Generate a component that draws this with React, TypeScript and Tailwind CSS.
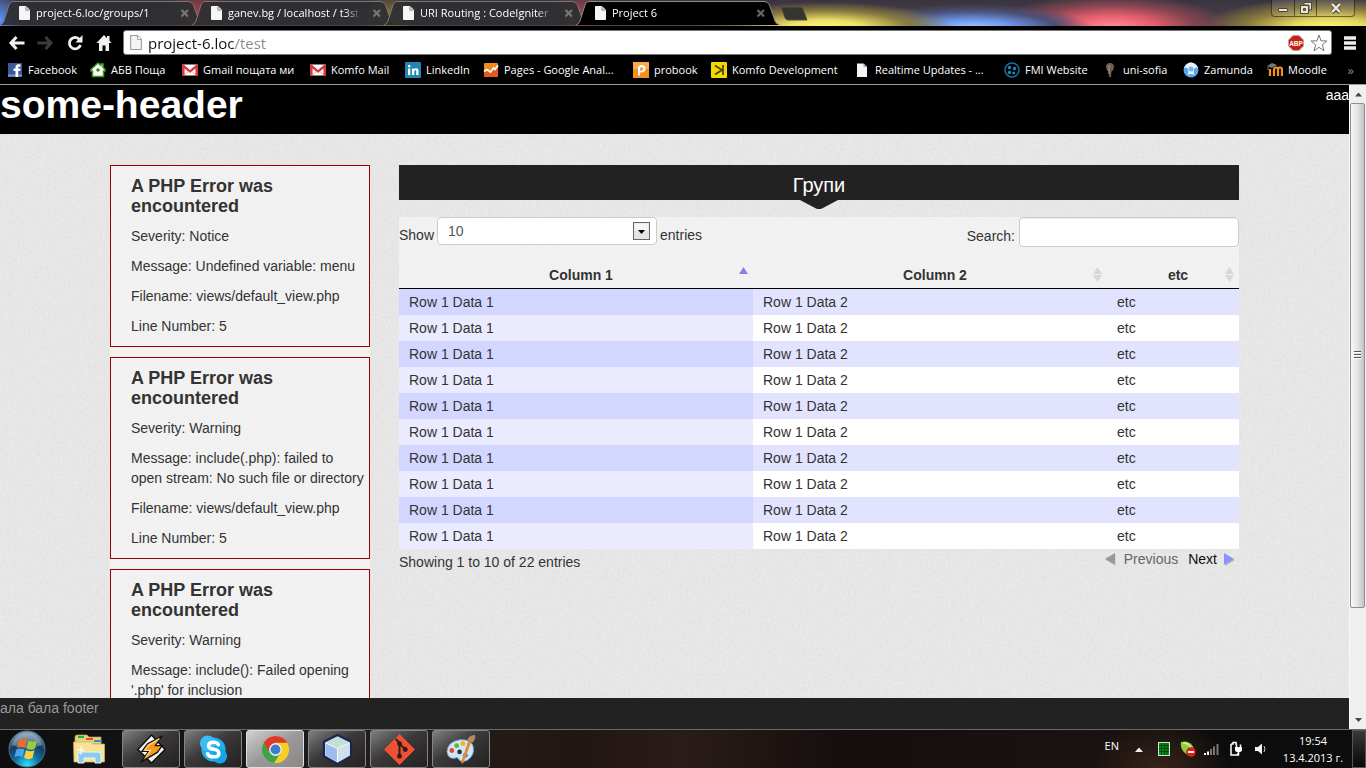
import React from "react";

const uiFont = "font-['Open_Sans','Noto_Sans',sans-serif]";

function PageIcon({ className = "h-[14px] w-[11px]", outline = false }: { className?: string; outline?: boolean }) {
  return (
    <svg viewBox="0 0 11 14" className={`${className} shrink-0`} aria-hidden="true">
      <path d="M.5.5H7L10.500 4V13.500H.5Z" fill={outline ? "#f4f4f4" : "#f5f5f5"} stroke={outline ? "#999" : "#f5f5f5"} />
      <path d="M6.800 .5V4.200H10.500" fill={outline ? "#fff" : "#ccc"} stroke={outline ? "#999" : "#888"} strokeWidth=".8" />
    </svg>
  );
}

const tabs = [
  { title: "project-6.loc/groups/1", active: false },
  { title: "ganev.bg / localhost / t3st", active: false },
  { title: "URI Routing : CodeIgniter", active: false },
  { title: "Project 6", active: true },
];

function Tab({ title, active }: { title: string; active: boolean }) {
  return (
    <div className={`relative flex h-[25px] w-48 min-w-0 items-center ${active ? "z-10" : ""}`}>
      <svg viewBox="0 0 204 25" preserveAspectRatio="none" className="absolute top-0 left-0 h-full w-[204px]" aria-hidden="true">
        <path
          d="M0 25Q3 24 4 21L9 5Q10 1.500 13 1.500H188Q192 1.500 193.500 5L199 21Q200 24 204 25"
          fill={active ? "#000" : "#2e2e31"}
          fillOpacity={active ? 1 : 0.93}
          stroke={active ? "#8a8a8a" : "#77777a"}
        />
      </svg>
      <button
        type="button"
        className="relative ml-[19px] flex w-[150px] items-center gap-[6px] text-left text-[11px] leading-5 whitespace-nowrap text-white"
      >
        <PageIcon />
        <span className="w-[138px] [mask-image:linear-gradient(90deg,#000_88%,transparent)]">{title}</span>
      </button>
      <button type="button" aria-label={`Close ${title}`} className="relative ml-[10px] size-3 shrink-0">
        <svg viewBox="0 0 12 12" className="size-3" aria-hidden="true">
          <path d="M2.500 3 9 9.500M9 3 2.500 9.500" stroke={active ? "#666" : "#777"} strokeWidth="2.200" />
        </svg>
      </button>
    </div>
  );
}

function TabStrip() {
  return (
    <div className="flex h-[26px] shrink-0 items-start bg-[radial-gradient(ellipse_130px_26px_at_825px_28px,#fffb78,#f0e068_30%,#8a7c40_65%,transparent),radial-gradient(ellipse_120px_24px_at_972px_28px,#a0d0ff,#6c94e8_35%,#4a5078_70%,transparent),radial-gradient(ellipse_120px_32px_at_1112px_27px,#ff9098,#e8606c_35%,#804450_70%,transparent),radial-gradient(ellipse_130px_30px_at_1330px_28px,#fffb78,#e8d860_30%,#887a3c_65%,transparent),radial-gradient(ellipse_22px_30px_at_0px_20px,#5a90ff,transparent),radial-gradient(ellipse_30px_22px_at_197px_10px,#a03c48,transparent),radial-gradient(ellipse_30px_22px_at_390px_16px,#8a7a30,transparent),radial-gradient(ellipse_30px_22px_at_580px_12px,#a04450,transparent),linear-gradient(#3a3440,#4c4248)]">
      {tabs.map((t) => (
        <Tab key={t.title} {...t} />
      ))}
      <button type="button" aria-label="New tab" className="mt-[6px] ml-3 h-[15px] w-[28px]">
        <svg viewBox="0 0 28 15" className="h-[15px] w-[28px]" aria-hidden="true">
          <path d="M1 1H20Q22 1 23 3L27 14H8Q6 14 5 12Z" fill="#35352f" stroke="#57523a" />
        </svg>
      </button>
      <div className="mr-[11px] ml-auto flex h-[17px] divide-x divide-black/50 rounded-b-[4px] border border-t-0 border-black/50 bg-white/10">
        <button type="button" aria-label="Minimize" className="grid w-[23px] place-items-center">
          <svg viewBox="0 0 12 12" className="size-3" aria-hidden="true">
            <rect x="1.500" y="6.500" width="9" height="3" rx=".5" fill="#e8e4d6" stroke="#4c463a" />
          </svg>
        </button>
        <button type="button" aria-label="Restore" className="grid w-[22px] place-items-center">
          <svg viewBox="0 0 14 14" className="size-[14px]" aria-hidden="true">
            <path d="M5 1.500H12.500V9H10V4H5Z" fill="#e8e4d6" stroke="#4c463a" />
            <path fillRule="evenodd" d="M1.500 4.500H9.500V12.500H1.500ZM4.500 7.500V9.500H6.500V7.500Z" fill="#e8e4d6" stroke="#4c463a" />
          </svg>
        </button>
        <button type="button" aria-label="Close window" className="grid w-[37px] place-items-center">
          <svg viewBox="0 0 14 12" className="h-3 w-[14px]" aria-hidden="true">
            <path d="M3 1.500 11 10.500M11 1.500 3 10.500" stroke="#4c463a" strokeWidth="4.200" />
            <path d="M3 1.800 11 10.200M11 1.800 3 10.200" stroke="#e8e4d6" strokeWidth="2.400" />
          </svg>
        </button>
      </div>
    </div>
  );
}

function Toolbar() {
  return (
    <div className="flex h-[31px] shrink-0 items-center bg-black pt-[2px] pr-[10px] pl-[8px]">
      <button type="button" aria-label="Back" className="mr-[12px]">
        <svg viewBox="0 0 17 16" className="h-4 w-[17px]" aria-hidden="true">
          <path d="M8.500 2 3 8l5.500 6M3 8H16.500" fill="none" stroke="#f2f2f2" strokeWidth="3" />
        </svg>
      </button>
      <button type="button" aria-label="Forward" className="mr-[13px]">
        <svg viewBox="0 0 17 16" className="h-4 w-[17px]" aria-hidden="true">
          <path d="M8.500 2 14 8l-5.500 6M14 8H.5" fill="none" stroke="#3c3c3c" strokeWidth="3" />
        </svg>
      </button>
      <button type="button" aria-label="Reload" className="mr-[13px]">
        <svg viewBox="0 0 16 16" className="size-4" aria-hidden="true">
          <path d="M12.500 4.500A5.700 5.700 0 1 0 13.500 10" fill="none" stroke="#f2f2f2" strokeWidth="2.800" />
          <path d="M15.500 0V7.500H8.500Z" fill="#f2f2f2" />
        </svg>
      </button>
      <button type="button" aria-label="Home" className="mr-[11px]">
        <svg viewBox="0 0 16 16" className="size-4" aria-hidden="true">
          <path d="M8 0 .5 8H3V16H6.500V10.500H9.500V16H13V8H15.500L13.500 5.800V1H11V3.200Z" fill="#f2f2f2" />
        </svg>
      </button>
      <div className="flex h-[25px] min-w-0 flex-1 items-center rounded-[3px] border border-[#777] bg-white pr-[3px] pl-[6px]">
        <PageIcon outline className="h-[15px] w-[12px]" />
        <input
          aria-label="Address"
          defaultValue="project-6.loc/test"
          className="ml-[6px] min-w-0 flex-1 bg-[linear-gradient(90deg,#111_87px,#888_87px)] bg-clip-text text-[15px] leading-[22px] text-transparent outline-none"
        />
        <svg viewBox="0 0 16 16" className="mr-[6px] size-4" aria-hidden="true">
          <path d="M5 .5H11L15.500 5V11L11 15.500H5L.5 11V5Z" fill="#c8200c" stroke="#a8a8a8" />
          <text x="8" y="10.600" textAnchor="middle" fontSize="6.500" fontWeight="700" fill="#fff" fontFamily="Liberation Sans, sans-serif">ABP</text>
        </svg>
        <button type="button" aria-label="Bookmark this page">
          <svg viewBox="0 0 18 18" className="size-[18px]" aria-hidden="true">
            <path d="M9 1 11 6.800 17 7 12.300 10.700 14 16.800 9 13.300 4 16.800 5.700 10.700 1 7 7 6.800Z" fill="#fff" stroke="#777" />
          </svg>
        </button>
      </div>
      <button type="button" aria-label="Menu" className="ml-[12px]">
        <svg viewBox="0 0 12 14" className="h-[14px] w-3" aria-hidden="true">
          <path d="M0 2H12M0 7H12M0 12H12" stroke="#eee" strokeWidth="3.600" />
        </svg>
      </button>
    </div>
  );
}

const gmail = (
  <>
    <rect x="0" y="2.500" width="16" height="11" rx="1" fill="#fff" />
    <path d="M0 3.500V13.500H2.600V6.500L8 11 13.400 6.500V13.500H16V2.500H14.500L8 8 1.500 2.500H0Z" fill="#d8383a" />
    <path d="M2.600 13 6 9.500M13.400 13 10 9.500" stroke="#e79a9a" />
  </>
);

const bookmarks: { label: string; width: string; icon: React.ReactNode }[] = [
  {
    label: "Facebook",
    width: "w-[83px]",
    icon: (
      <>
        <rect x="1" y="1" width="14" height="14" fill="#3b5998" />
        <rect x="1" y="12.500" width="14" height="2" fill="#7d94c4" />
        <path d="M8.500 15V9H6.500V6.500H8.500V5Q8.500 2.300 11.500 2.300H13.500V4.800H12Q11.200 4.800 11.200 5.500V6.500H13.500L13.200 9H11.200V15Z" fill="#fff" />
      </>
    ),
  },
  {
    label: "АБВ Поща",
    width: "w-[92px]",
    icon: (
      <>
        <path d="M8 1 1 7.500V9H2.500V14.500H13.500V9H15V7.500L13 5.500V2H10.800V3.500Z" fill="#fff" stroke="#3c9b1c" strokeWidth="1.500" />
        <circle cx="8" cy="8" r="1.800" fill="#2f8a18" />
      </>
    ),
  },
  { label: "Gmail пощата ми", width: "w-[128px]", icon: gmail },
  { label: "Komfo Mail", width: "w-[95px]", icon: gmail },
  {
    label: "LinkedIn",
    width: "w-[78px]",
    icon: (
      <>
        <rect width="16" height="16" rx="1" fill="#2087b4" />
        <path d="M3 6.500H5.300V13H3ZM3 3H5.300V5.200H3ZM7 6.500H9.200V7.300Q9.900 6.300 11.300 6.300 13.500 6.300 13.500 9V13H11.200V9.500Q11.200 8.200 10.300 8.200 9.300 8.200 9.300 9.500V13H7Z" fill="#fff" />
      </>
    ),
  },
  {
    label: "Pages - Google Anal...",
    width: "w-[150px]",
    icon: (
      <>
        <rect x="1" y="1" width="14" height="14" rx="1" fill="#f08a1c" />
        <path d="M1 8 5 10 8 7 15 6V15H1Z" fill="#e8581c" />
        <path d="M1 9.500 4 7.500 7.500 10 10.500 6 12 7.500 15 3.500" fill="none" stroke="#fff" strokeWidth="1.800" />
      </>
    ),
  },
  {
    label: "probook",
    width: "w-[78px]",
    icon: (
      <>
        <rect width="16" height="16" fill="#f5921e" />
        <rect width="16" height="7" fill="#f8ab4c" />
        <path d="M6 13.500V6.500Q6 4 8.500 4 11.500 4 11.500 6.500 11.500 9.500 8.500 9.500H6" fill="none" stroke="#fff" strokeWidth="2" />
      </>
    ),
  },
  {
    label: "Komfo Development",
    width: "w-[143px]",
    icon: (
      <>
        <rect width="16" height="16" rx="1" fill="#f1d900" />
        <path d="M4 3.500 11 8 4 12.500M12 3V13" fill="none" stroke="#4c4000" strokeWidth="1.700" />
      </>
    ),
  },
  {
    label: "Realtime Updates - ...",
    width: "w-[150px]",
    icon: (
      <>
        <path d="M3 1.500H9.500L13 5V15H3Z" fill="#f5f5f5" />
        <path d="M9.500 1.500V5H13Z" fill="#aaa" />
      </>
    ),
  },
  {
    label: "FMI Website",
    width: "w-[98px]",
    icon: (
      <>
        <circle cx="8" cy="8" r="7" fill="none" stroke="#1273a8" strokeWidth="1.500" />
        <circle cx="5.500" cy="5.500" r="1.700" fill="#1c86c0" />
        <circle cx="10.500" cy="6.500" r="1.700" fill="#1c86c0" />
        <circle cx="5.500" cy="10.500" r="1.700" fill="#1c86c0" />
        <circle cx="9.700" cy="11" r="1.500" fill="#1c86c0" />
      </>
    ),
  },
  {
    label: "uni-sofia",
    width: "w-[81px]",
    icon: (
      <>
        <path d="M8 1Q12 1 12 5 12 8 9.500 9.500L9 15H7L6.500 9.500Q4 8 4 5 4 1 8 1Z" fill="#6e5c50" />
        <path d="M7 3V12" stroke="#a8998c" />
      </>
    ),
  },
  {
    label: "Zamunda",
    width: "w-[84px]",
    icon: (
      <>
        <circle cx="8" cy="8" r="7.500" fill="#5ca5ee" />
        <path d="M1 6Q3 1 8 .5 13 1 15 6 12 5 11 7 10 11 12 13Q8 11 4 13 6 11 5 7 4 5 1 6Z" fill="#e8f4ff" />
        <circle cx="8" cy="7" r="2.500" fill="#72b4f4" />
      </>
    ),
  },
  {
    label: "Moodle",
    width: "w-[76px]",
    icon: (
      <>
        <path d="M3 14V7M7 14V8Q7 5.500 9.300 5.500 11 5.500 11 8V14M11 8Q11 5.500 13 5.500 15 5.500 15 8V14" fill="none" stroke="#f0941c" strokeWidth="2.200" />
        <path d="M0 4 5 1 10 3 5 6Z" fill="#777" />
        <path d="M1 4.500V8" stroke="#777" />
      </>
    ),
  },
];

function BookmarksBar() {
  return (
    <nav aria-label="Bookmarks" className="flex h-7 shrink-0 items-center border-b border-[#9a9a9a] bg-black pr-3 pb-[2px] pl-[7px]">
      {bookmarks.map((b) => (
        <a key={b.label} href="#" className={`${b.width} flex shrink-0 items-center gap-[5px] text-[11px] leading-5 whitespace-nowrap text-white`}>
          <svg viewBox="0 0 16 16" className="size-4 shrink-0" aria-hidden="true">
            {b.icon}
          </svg>
          {b.label}
        </a>
      ))}
      <button type="button" aria-label="More bookmarks" className="ml-auto text-[13px] leading-5 text-[#888]">
        »
      </button>
    </nav>
  );
}

const errors = [
  ["Severity: Notice", "Message: Undefined variable: menu", "Filename: views/default_view.php", "Line Number: 5"],
  [
    "Severity: Warning",
    "Message: include(.php): failed to open stream: No such file or directory",
    "Filename: views/default_view.php",
    "Line Number: 5",
  ],
  ["Severity: Warning", "Message: include(): Failed opening '.php' for inclusion"],
];

function ErrorBox({ lines }: { lines: string[] }) {
  return (
    <section className="flex flex-col gap-[10px] border border-[#990000] py-[10px] pr-[3px] pl-5">
      <h4 className="text-[18px] leading-5 font-bold">A PHP Error was encountered</h4>
      {lines.map((l) => (
        <p key={l}>{l}</p>
      ))}
    </section>
  );
}

function SortIcon({ active }: { active?: boolean }) {
  return (
    <svg viewBox="0 0 9 15" className="absolute top-[6px] right-[5px] h-[15px] w-[9px]" aria-hidden="true">
      <path d="M4.500 0 9 7H0Z" fill={active ? "#7f86e2" : "#d8d8d8"} />
      {!active && <path d="M4.500 15 9 8H0Z" fill="#d8d8d8" />}
    </svg>
  );
}

const rows = Array.from({ length: 10 }, (_, i) => i);

function DataTable() {
  return (
    <div>
      <div className="mt-[17px] bg-white/45">
        <div className="flex items-start justify-between">
          <label className="flex items-center gap-[3px]">
            <span className="pt-2">Show</span>
            <span className="relative">
              <select defaultValue="10" className="block h-7 w-[220px] appearance-none rounded-[4px] border border-[#ccc] bg-white px-[10px] text-[14px] text-[#555]">
                <option>10</option>
                <option>25</option>
                <option>50</option>
                <option>100</option>
              </select>
              <svg viewBox="0 0 17 18" className="pointer-events-none absolute top-[5px] right-[7px] h-[18px] w-[17px]" aria-hidden="true">
                <rect x=".5" y=".5" width="16" height="17" fill="#e4e4e4" stroke="#666" />
                <rect x="1.500" y="1.500" width="14" height="7" fill="#f6f6f6" />
                <path d="M5 8H12L8.500 12Z" fill="#000" />
              </svg>
            </span>
            <span className="pt-2">entries</span>
          </label>
          <label className="flex items-center gap-1">
            <span className="pt-2">Search:</span>
            <input type="text" className="h-[30px] w-[220px] rounded-[4px] border border-[#ccc] bg-white px-[6px] shadow-[inset_0_1px_1px_rgba(0,0,0,0.075)]" />
          </label>
        </div>
        <table className="mt-[14px] w-full table-fixed border-collapse">
          <colgroup>
            <col />
            <col />
            <col className="w-[132px]" />
          </colgroup>
          <thead>
            <tr className="h-[27px] border-b border-black">
              {["Column 1", "Column 2", "etc"].map((c, i) => (
                <th key={c} className="relative pt-1 pb-[2px] pl-[10px] text-center font-bold">
                  {c}
                  <SortIcon active={i === 0} />
                </th>
              ))}
            </tr>
          </thead>
          <tbody>
            {rows.map((r) => (
              <tr key={r} className="h-[26px] bg-white odd:bg-[#e2e4ff]">
                <td className={`px-[10px] py-[3px] ${r % 2 === 0 ? "bg-[#d3d6ff]" : "bg-[#eaebff]"}`}>Row 1 Data 1</td>
                <td className="px-[10px] py-[3px]">Row 1 Data 2</td>
                <td className="px-[10px] py-[3px]">etc</td>
              </tr>
            ))}
          </tbody>
        </table>
      </div>
      <div className="flex items-start justify-between">
        <p className="pt-[3px]">Showing 1 to 10 of 22 entries</p>
        <div className="flex gap-[10px] pr-1">
          <button type="button" className="flex items-center gap-2 text-[#666]">
            <svg viewBox="0 0 12 14" className="h-[14px] w-3" aria-hidden="true">
              <path d="M11.500 2V14L1.500 8Z" fill="#c4c4c4" />
              <path d="M11 1V12.500L1 7Z" fill="#999" />
            </svg>
            Previous
          </button>
          <button type="button" className="flex items-center gap-[6px] text-[#111]">
            Next
            <svg viewBox="0 0 12 14" className="h-[14px] w-3" aria-hidden="true">
              <path d="M2 3V14L12 8Z" fill="#b4b4b4" />
              <path d="M1 1V12.500L11 7Z" fill="#8a90ff" />
            </svg>
          </button>
        </div>
      </div>
    </div>
  );
}

function PaperTexture() {
  return (
    <svg className="absolute inset-0 size-full opacity-10" aria-hidden="true">
      <filter id="paper" x="0" y="0" width="100%" height="100%">
        <feTurbulence type="fractalNoise" baseFrequency="0.35" numOctaves="3" seed="4" />
        <feColorMatrix values="0.7 0 0 0 0.25  0.7 0 0 0 0.25  0.7 0 0 0 0.25  0 0 0 0 1" />
      </filter>
      <rect width="100%" height="100%" filter="url(#paper)" />
    </svg>
  );
}

function WebPage() {
  return (
    <div className="relative flex min-w-0 flex-1 flex-col overflow-hidden bg-[#eaeaea] font-['Liberation_Sans',Arial,sans-serif] text-[14px] leading-5 text-[#333]">
      <PaperTexture />
      <header className="relative flex h-[49px] shrink-0 items-start justify-between bg-black text-white">
        <h1 className="text-[39px] leading-10 font-bold">some-header</h1>
        <span>aaa</span>
      </header>
      <div className="relative min-h-0 flex-1 overflow-hidden pt-[31px]">
        <div className="mx-auto flex max-w-[1129px] items-start gap-[29px]">
          <aside className="flex w-[260px] shrink-0 flex-col gap-[10px] bg-white/45">
            {errors.map((lines, i) => (
              <ErrorBox key={i} lines={lines} />
            ))}
          </aside>
          <main className="min-w-0 flex-1">
            <h2 className="relative h-[35px] bg-[#222] pt-[2px] text-center text-[20px] leading-9 text-white">
              Групи
              <svg viewBox="0 0 38 9" className="absolute top-full left-1/2 h-[9px] w-[38px] -translate-x-1/2" aria-hidden="true">
                <path d="M0 0H38L22 8.500Q19 9.500 16 8.500Z" fill="#222" />
              </svg>
            </h2>
            <DataTable />
          </main>
        </div>
      </div>
      <footer className="relative h-[31px] shrink-0 bg-[#222] text-[#999]">ала бала footer</footer>
    </div>
  );
}

function Scrollbar() {
  return (
    <div className="flex w-[17px] shrink-0 flex-col border-l border-[#fafafa] bg-[#efefef]" aria-hidden="true">
      <svg viewBox="0 0 17 18" className="h-[18px] w-[17px] shrink-0">
        <path d="M5 11.500H12L8.500 7.500Z" fill="#444" />
      </svg>
      <div className="flex-1">
        <div className="grid h-[83%] w-[15px] place-items-center rounded-[2px] border border-[#8e8e8e] bg-linear-to-r from-[#f8f8f8] via-[#e4e4e6] to-[#c4c4c8]">
          <svg viewBox="0 0 7 8" className="h-2 w-[7px]">
            <path d="M0 .5H7M0 3.500H7M0 6.500H7" stroke="#555" />
            <path d="M0 1.500H7M0 4.500H7M0 7.500H7" stroke="#fff" />
          </svg>
        </div>
      </div>
      <svg viewBox="0 0 17 18" className="h-[18px] w-[17px] shrink-0">
        <path d="M5 7H12L8.500 11Z" fill="#444" />
      </svg>
    </div>
  );
}

const apps: { name: string; active?: boolean; icon: React.ReactNode }[] = [
  {
    name: "Winamp",
    icon: (
      <>
        <path d="M16 1 30 16 16 30 2 16Z" fill="#f4f4f4" stroke="#111" strokeWidth="1.500" />
        <path d="M27 2 12 10 6 18H13L5 29 22 19 27 12H20Z" fill="#f59a1c" stroke="#111" strokeWidth="1.300" />
        <path d="M24 5 13 11.500 9 17H15L10 24" fill="none" stroke="#ffd68c" strokeWidth="1.300" />
      </>
    ),
  },
  {
    name: "Skype",
    icon: (
      <>
        <circle cx="16" cy="16" r="12.500" fill="#1eb0ee" />
        <circle cx="10" cy="9.500" r="8" fill="#3dbcf2" />
        <circle cx="22.500" cy="23" r="7.500" fill="#14a4e8" />
        <path d="M21 11Q20 8.500 16 8.500 11 8.500 11 12 11 15 16 15.800 21.500 16.600 21.500 20 21.500 23.500 16 23.500 11 23.500 10 20.500" fill="none" stroke="#fff" strokeWidth="3.800" strokeLinecap="round" />
      </>
    ),
  },
  {
    name: "Chrome",
    active: true,
    icon: (
      <>
        <circle cx="16" cy="16" r="14" fill="#f3c81c" />
        <path d="M16 16 3.900 9A14 14 0 0 0 14.500 29.900L21.500 19Z" fill="#3ea34a" />
        <path d="M3.900 9A14 14 0 0 1 28.200 9H16L9.500 18.500Z" fill="#de3a2c" />
        <path d="M28 9.200A14 14 0 0 1 15 30L22 19 21 9.200Z" fill="#f6ce24" />
        <circle cx="16" cy="16" r="6.600" fill="#f4f4f4" />
        <circle cx="16" cy="16" r="5.200" fill="#3b7fc8" />
      </>
    ),
  },
  {
    name: "NetBeans",
    icon: (
      <>
        <path d="M16 1 30 8V23L16 31 2 23V8Z" fill="#c4dcea" stroke="#1c2454" strokeWidth="2.200" strokeLinejoin="round" />
        <path d="M4 9.500 16 15V29L4 22Z" fill="#9dbcec" />
        <path d="M28 9.500 16 15V29L28 22Z" fill="#cfe0ea" />
        <path d="M16 3 28 9 16 15 4 9Z" fill="#c4dfd4" />
        <path d="M16 15V29M4 9.500 16 15 28 9.500" stroke="#f4faff" fill="none" />
      </>
    ),
  },
  {
    name: "Git",
    icon: (
      <>
        <path d="M16 .5 31.500 16 16 31.500.5 16Z" fill="#ee5033" stroke="#ee5033" strokeLinejoin="round" />
        <path d="M12 5 16 9V23M16 10 22 16" stroke="#2c1c1a" strokeWidth="2" fill="none" />
        <circle cx="16" cy="10" r="2.500" fill="#2c1c1a" />
        <circle cx="16" cy="23" r="2.500" fill="#2c1c1a" />
        <circle cx="22" cy="16" r="2.500" fill="#2c1c1a" />
      </>
    ),
  },
  {
    name: "Paint",
    icon: (
      <>
        <path d="M1 18Q2 8 14 6 26 5 28 13 30 22 22 27 16 30 13 26 12 23 9 25 2 26 1 18Z" fill="#cfe6f6" stroke="#7aa6cc" />
        <circle cx="6" cy="17" r="2.500" fill="#e04838" />
        <circle cx="11" cy="12" r="2.500" fill="#5cb838" />
        <circle cx="17.500" cy="10" r="2.500" fill="#f2b022" />
        <circle cx="14" cy="18.500" r="2.400" fill="#20303c" />
        <circle cx="20" cy="22" r="2.500" fill="#3c84d8" />
        <path d="M26 8 18 30 16 30.500 16 28 23 7Z" fill="#e8862a" />
        <path d="M22 6Q24 1 30 1 31 6 27 9Z" fill="#b08a64" />
      </>
    ),
  },
];

function Taskbar() {
  return (
    <div className="flex h-[39px] shrink-0 items-stretch border-t border-[#6a6a6a] bg-[radial-gradient(ellipse_70px_50px_at_1160px_40px,#38241a,transparent),linear-gradient(90deg,#0e0e0e_0,#121212_9%,#241f1f_30%,#221612_42%,#2a1c18_50%,#140e0d_62%,#1a1210_80%,#0c0c0c_90%)]">
      <button type="button" aria-label="Start" className="ml-[8px] grid w-[38px] place-items-center">
        <svg viewBox="0 0 38 38" className="size-[38px]" aria-hidden="true">
          <defs>
            <radialGradient id="orb" cx=".5" cy=".95" r=".95">
              <stop offset="0" stopColor="#2ce4ff" />
              <stop offset=".35" stopColor="#1273a8" />
              <stop offset=".65" stopColor="#163c60" />
              <stop offset="1" stopColor="#8aa8bc" />
            </radialGradient>
          </defs>
          <circle cx="19" cy="19" r="18" fill="url(#orb)" stroke="#4c7084" />
          <path d="M4 15Q8 3 19 3T34 15Q19 21 4 15Z" fill="#fff" fillOpacity=".28" />
          <path d="M11 10Q15 7.500 19 10L17 18Q13 16 9 18Z" fill="#ee6a32" />
          <path d="M20.500 10.500Q25 13 29 10.500L27 18.500Q23 21 18.500 18.500Z" fill="#9ccc3c" />
          <path d="M8.500 19.500Q12.500 17.500 16.500 19.500L14.500 27Q10.500 25 6.500 27Z" fill="#4aa8ea" />
          <path d="M18 20Q22.500 22.500 26.500 20L24.500 28Q20 30.500 16 27.500Z" fill="#fcd03c" />
        </svg>
      </button>
      <button type="button" aria-label="Explorer" className="mr-[17px] ml-[27px] grid w-8 place-items-center">
        <svg viewBox="0 0 32 32" className="size-8" aria-hidden="true">
          <path d="M2 4Q2 2 4 2H14L16 4H28V11H2Z" fill="#e8d078" stroke="#b89c48" strokeWidth=".7" />
          <path d="M5 3H11V5H5Z" fill="#18b048" />
          <path d="M13 5H20V7H13Z" fill="#e05030" />
          <path d="M21 7H29V9H21Z" fill="#3888e0" />
          <path d="M.5 9H18L20 11H31.500V29H1Z" fill="#f6e398" stroke="#cbb060" strokeWidth=".7" />
          <path d="M5 30V22Q5 19 8 19H25Q28 19 28 22V30H22V25H11V30Z" fill="#8ccbee" stroke="#e4f6ff" />
          <path d="M8 13V22M4 17H12" stroke="#fff" />
        </svg>
      </button>
      <div className="flex gap-1">
        {apps.map((a) => (
          <button
            key={a.name}
            type="button"
            aria-label={a.name}
            className={`grid w-[58px] place-items-center rounded-[3px] border ${
              a.active
                ? "border-[#e0e0e0] bg-linear-to-br from-[#d0d0d0] via-[#9a9898] to-[#8c8888]"
                : "border-[#858585] bg-linear-to-br from-[#808080] via-[#3a3838] via-45% to-[#242121]"
            }`}
          >
            <svg viewBox="0 0 32 32" className="size-[31px]" aria-hidden="true">
              {a.icon}
            </svg>
          </button>
        ))}
      </div>
      <div className="ml-auto flex items-center text-[11px] text-white">
        <span className="mr-[16px] pb-[6px]">EN</span>
        <button type="button" aria-label="Show hidden icons" className="mr-[15px]">
          <svg viewBox="0 0 8 5" className="h-[5px] w-2" aria-hidden="true">
            <path d="M0 5H8L4 .5Z" fill="#eee" />
          </svg>
        </button>
        <svg viewBox="0 0 12 14" className="mr-[10px] h-[14px] w-3" aria-hidden="true">
          <rect x=".5" y=".5" width="11" height="13" fill="#0a8a1c" stroke="#c4e8c8" />
          <path d="M1 3.500H11M1 6.500H11M1 9.500H11M3.500 1V13M6.500 1V13M9 1V13" stroke="#043c08" strokeWidth=".8" />
        </svg>
        <svg viewBox="0 0 16 16" className="mr-[8px] size-4" aria-hidden="true">
          <path d="M1 1Q8-1 12 4 16 9 11 14 6 14 3 10 0 6 1 1Z" fill="#92cc3c" />
          <path d="M3 2Q8 2 11 6" stroke="#d4f09c" fill="none" strokeWidth="1.500" />
          <circle cx="11" cy="11" r="4.800" fill="#dc2018" />
          <path d="M8 11H14" stroke="#fff" strokeWidth="2" />
        </svg>
        <svg viewBox="0 0 15 12" className="mr-[10px] h-3 w-[15px]" aria-hidden="true">
          <path d="M1 12V10M4 12V8.500" stroke="#fff" strokeWidth="2" />
          <path d="M7 12V6M10 12V3.500M13.500 12V1" stroke="#777" strokeWidth="2" />
        </svg>
        <svg viewBox="0 0 14 16" className="mr-[12px] h-4 w-[14px]" aria-hidden="true">
          <path d="M2 3H4V1.500H7V3H8M2 3V14H9V12" fill="none" stroke="#fff" strokeWidth="1.500" />
          <path d="M6 6H13V9Q13 11 9.500 11 6 11 6 9Z" fill="#fff" />
          <path d="M7.500 3.500V6M11.500 3.500V6M9.500 11V14.500" stroke="#fff" strokeWidth="1.500" />
        </svg>
        <svg viewBox="0 0 12 12" className="mr-[13px] h-3 w-3" aria-hidden="true">
          <path d="M0 4H3L7 .5V11.500L3 8H0Z" fill="#f4f4f4" />
          <path d="M9 3Q11 6 9 9" stroke="#ccc" fill="none" />
        </svg>
        <div className="w-[66px] text-center leading-[17px] whitespace-nowrap">
          <div>19:54</div>
          <div>13.4.2013 г.</div>
        </div>
        <button
          type="button"
          aria-label="Show desktop"
          className="ml-[6px] h-full w-[14px] border border-[#555] bg-linear-to-b from-[#3a3a3a] to-[#080808]"
        />
      </div>
    </div>
  );
}

export default function App() {
  return (
    <div className={`flex h-screen flex-col overflow-hidden bg-black ${uiFont}`}>
      <TabStrip />
      <Toolbar />
      <BookmarksBar />
      <div className="flex min-h-0 flex-1">
        <WebPage />
        <Scrollbar />
      </div>
      <Taskbar />
    </div>
  );
}
